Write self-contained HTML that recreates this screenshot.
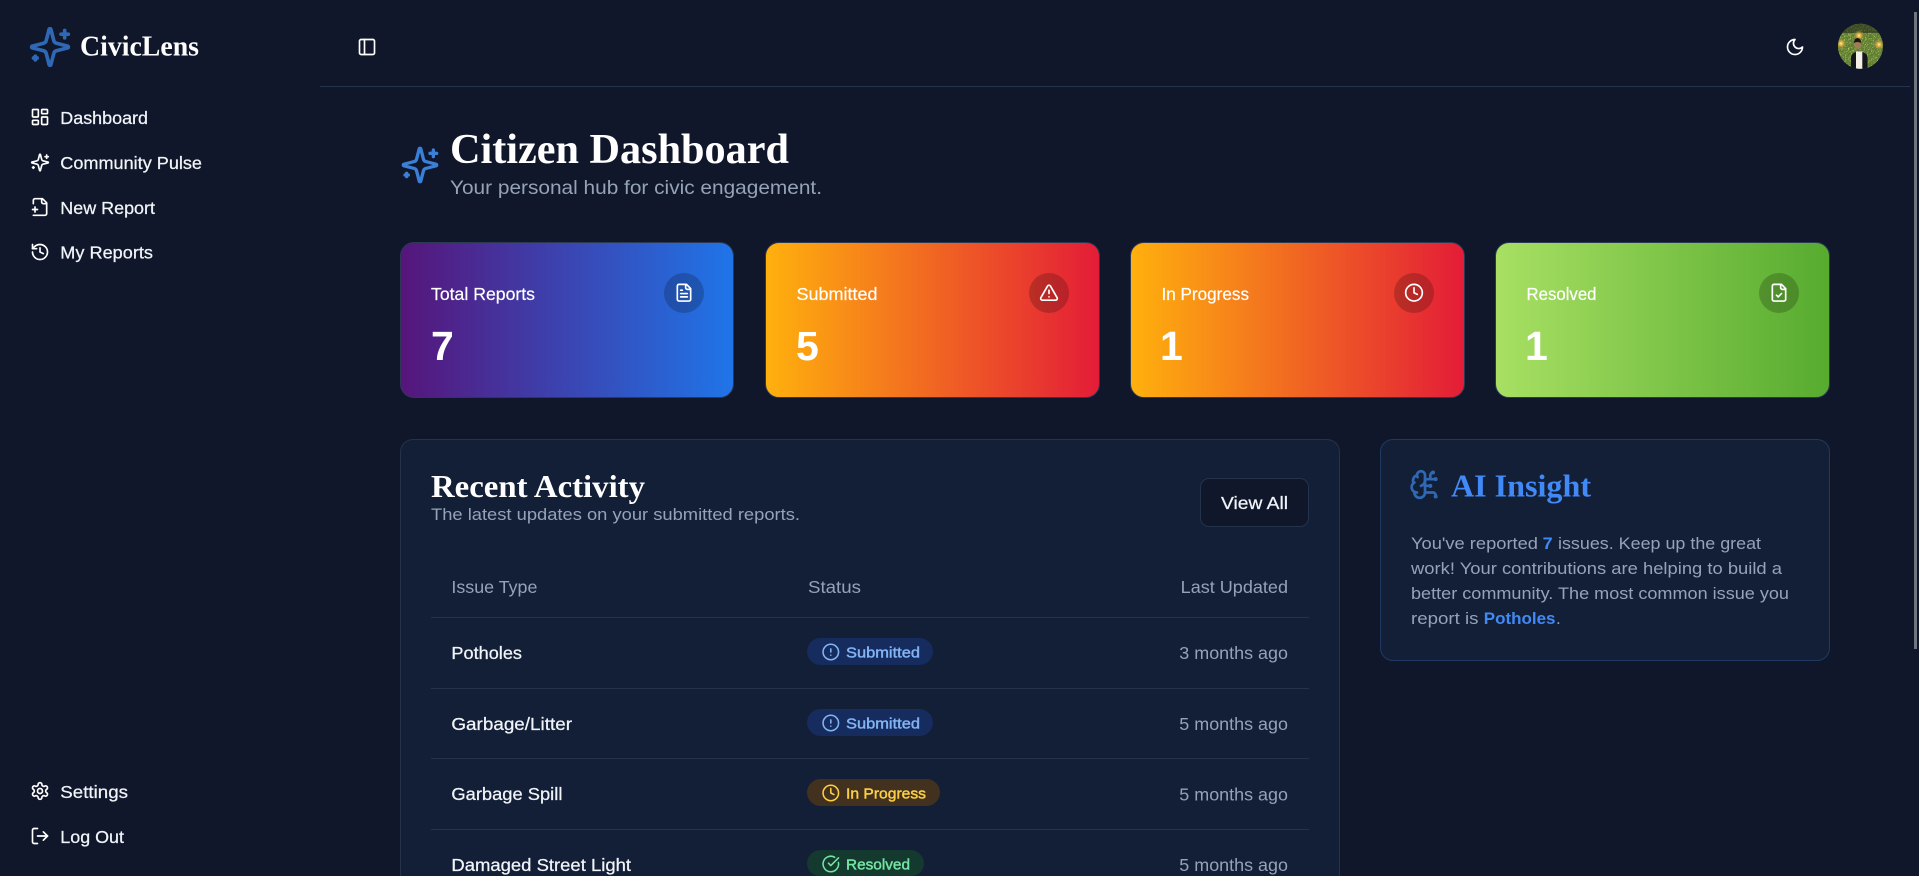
<!DOCTYPE html>
<html lang="en">
<head>
<meta charset="utf-8">
<title>CivicLens - Citizen Dashboard</title>
<style>
html,body{margin:0;padding:0;width:1919px;height:876px;overflow:hidden;background:#10172a}
#page{position:relative;width:1919px;height:876px;overflow:hidden;background:#10172a}
.box{position:absolute;box-sizing:border-box}
.stat{top:242.3px;width:334.4px;height:156px;border-radius:14px;border:1px solid #2b3953;background-origin:border-box}
.circle{position:absolute;top:272.7px;width:40px;height:40px;border-radius:50%;background:rgba(0,0,0,.2)}
.card{background:#131f36;border:1px solid #24324c;border-radius:13px}
.rule{position:absolute;height:1px;background:#24324c}
.pill{position:absolute;height:27px;border-radius:14px}
svg.top{position:absolute;left:0;top:0}
text{font-family:"Liberation Sans",sans-serif;font-size:17.6px;fill:#f1f5f9}
.m{stroke:#f1f5f9;stroke-width:.25px}
.mut{fill:#94a3b8}
.serif{font-family:"Liberation Serif",serif;font-weight:700;fill:#fff}
.wh{fill:#fff;stroke:#fff;stroke-width:.2px}
.num{font-weight:700;font-size:41px;fill:#fff}
.bdg{font-size:15px;stroke-width:.45px}
.p{font-size:17px;fill:#94a3b8}
.b{font-size:17px;font-weight:700;fill:#4189f6}
.i{fill:none;stroke:#fff;stroke-width:2;stroke-linecap:round;stroke-linejoin:round}
</style>
</head>
<body>
<div id="page">
<div class="box" style="left:320px;top:86px;width:1590px;height:1px;background:#24324c"></div>
<div class="box" style="left:1914px;top:12px;width:2.5px;height:637px;background:#71757d"></div>

<div class="box stat" style="left:400.1px;background-image:linear-gradient(90deg,#56157a,#1f75e9)"></div>
<div class="box stat" style="left:765.2px;background-image:linear-gradient(90deg,#ffb10d,#e31c37)"></div>
<div class="box stat" style="left:1130.3px;background-image:linear-gradient(90deg,#ffb10d,#e31c37)"></div>
<div class="box stat" style="left:1495.4px;background-image:linear-gradient(90deg,#a8e063,#56ab2f)"></div>
<div class="circle" style="left:664px"></div>
<div class="circle" style="left:1029px"></div>
<div class="circle" style="left:1394px"></div>
<div class="circle" style="left:1759px"></div>

<div class="box card" style="left:400px;top:439.3px;width:939.5px;height:436.7px;border-bottom:0;border-radius:13px 13px 0 0"></div>
<div class="box card" style="left:1380px;top:439.3px;width:449.5px;height:221.5px;border-color:#1e3a63"></div>
<div class="box" style="left:1200px;top:478px;width:109px;height:49px;background:#10172a;border:1px solid #24324c;border-radius:9px"></div>

<div class="rule" style="left:431px;top:617px;width:878px"></div>
<div class="rule" style="left:431px;top:688px;width:878px"></div>
<div class="rule" style="left:431px;top:758px;width:878px"></div>
<div class="rule" style="left:431px;top:829px;width:878px"></div>

<div class="pill" style="left:807px;top:638px;width:126px;background:#162c5e"></div>
<div class="pill" style="left:807px;top:709px;width:126px;background:#162c5e"></div>
<div class="pill" style="left:807px;top:779px;width:133px;background:#43311f"></div>
<div class="pill" style="left:807px;top:850px;width:117px;height:26px;border-radius:14px 14px 13px 13px;background:#14392f"></div>

<svg class="top" width="1919" height="876" viewBox="0 0 1919 876" xmlns="http://www.w3.org/2000/svg">
<defs>
<filter id="leaf" x="0" y="0" width="100%" height="100%"><feTurbulence type="fractalNoise" baseFrequency=".6" numOctaves="2" seed="4"/><feColorMatrix values="0 0 0 0 .1  0 0 0 0 .16  0 0 0 0 .04  2.4 0 0 0 -.9"/></filter>
<filter id="leaf2" x="0" y="0" width="100%" height="100%"><feTurbulence type="fractalNoise" baseFrequency=".7" numOctaves="2" seed="9"/><feColorMatrix values="0 0 0 0 .72  0 0 0 0 .8  0 0 0 0 .3  2.8 0 0 0 -1.3"/></filter>
<clipPath id="av"><circle cx="1860.5" cy="46.3" r="22.5"/></clipPath>
<radialGradient id="glow"><stop offset="0" stop-color="#fff0b0"/><stop offset=".4" stop-color="#e8b040" stop-opacity=".85"/><stop offset="1" stop-color="#a08a20" stop-opacity="0"/></radialGradient>
</defs>

<!-- logo -->
<svg x="28" y="25" width="44" height="44" viewBox="0 0 24 24" class="i" style="stroke:#2f68b5"><path d="M9.937 15.5A2 2 0 0 0 8.5 14.063l-6.135-1.582a.5.5 0 0 1 0-.962L8.5 9.936A2 2 0 0 0 9.937 8.5l1.582-6.135a.5.5 0 0 1 .963 0L14.063 8.5A2 2 0 0 0 15.5 9.937l6.135 1.581a.5.5 0 0 1 0 .964L15.5 14.063a2 2 0 0 0-1.437 1.437l-1.582 6.135a.5.5 0 0 1-.963 0z"/><path d="M20 3v4M22 5h-4M4 17v2M5 18H3"/></svg>
<text class="serif" x="80" y="55.5" style="font-size:29px" textLength="119" lengthAdjust="spacingAndGlyphs">CivicLens</text>

<!-- nav icons -->
<svg x="30" y="107" width="20" height="20" viewBox="0 0 24 24" class="i"><rect width="7" height="9" x="3" y="3" rx="1"/><rect width="7" height="5" x="14" y="3" rx="1"/><rect width="7" height="9" x="14" y="12" rx="1"/><rect width="7" height="5" x="3" y="16" rx="1"/></svg>
<svg x="30" y="152.5" width="20" height="20" viewBox="0 0 24 24" class="i"><path d="M9.937 15.5A2 2 0 0 0 8.5 14.063l-6.135-1.582a.5.5 0 0 1 0-.962L8.5 9.936A2 2 0 0 0 9.937 8.5l1.582-6.135a.5.5 0 0 1 .963 0L14.063 8.5A2 2 0 0 0 15.5 9.937l6.135 1.581a.5.5 0 0 1 0 .964L15.5 14.063a2 2 0 0 0-1.437 1.437l-1.582 6.135a.5.5 0 0 1-.963 0z"/><path d="M20 3v4M22 5h-4M4 17v2M5 18H3"/></svg>
<svg x="30" y="197" width="20" height="20" viewBox="0 0 24 24" class="i"><path d="M4 22h14a2 2 0 0 0 2-2V7l-5-5H6a2 2 0 0 0-2 2v4"/><path d="M14 2v4a2 2 0 0 0 2 2h4"/><path d="M3 15h6"/><path d="M6 12v6"/></svg>
<svg x="30" y="242" width="20" height="20" viewBox="0 0 24 24" class="i"><path d="M3 12a9 9 0 1 0 9-9 9.75 9.75 0 0 0-6.74 2.74L3 8"/><path d="M3 3v5h5"/><path d="M12 7v5l4 2"/></svg>
<svg x="30" y="781" width="20" height="20" viewBox="0 0 24 24" class="i"><path d="M12.22 2h-.44a2 2 0 0 0-2 2v.18a2 2 0 0 1-1 1.73l-.43.25a2 2 0 0 1-2 0l-.15-.08a2 2 0 0 0-2.73.73l-.22.38a2 2 0 0 0 .73 2.73l.15.1a2 2 0 0 1 1 1.72v.51a2 2 0 0 1-1 1.74l-.15.09a2 2 0 0 0-.73 2.73l.22.38a2 2 0 0 0 2.73.73l.15-.08a2 2 0 0 1 2 0l.43.25a2 2 0 0 1 1 1.73V20a2 2 0 0 0 2 2h.44a2 2 0 0 0 2-2v-.18a2 2 0 0 1 1-1.73l.43-.25a2 2 0 0 1 2 0l.15.08a2 2 0 0 0 2.73-.73l.22-.39a2 2 0 0 0-.73-2.73l-.15-.08a2 2 0 0 1-1-1.74v-.5a2 2 0 0 1 1-1.74l.15-.09a2 2 0 0 0 .73-2.73l-.22-.38a2 2 0 0 0-2.73-.73l-.15.08a2 2 0 0 1-2 0l-.43-.25a2 2 0 0 1-1-1.73V4a2 2 0 0 0-2-2z"/><circle cx="12" cy="12" r="3"/></svg>
<svg x="30" y="826" width="20" height="20" viewBox="0 0 24 24" class="i"><path d="M9 21H5a2 2 0 0 1-2-2V5a2 2 0 0 1 2-2h4"/><polyline points="16 17 21 12 16 7"/><line x1="21" x2="9" y1="12" y2="12"/></svg>

<!-- nav text -->
<text class="m" x="60.3" y="124" textLength="87.7" lengthAdjust="spacingAndGlyphs">Dashboard</text>
<text class="m" x="60.3" y="169" textLength="141.7" lengthAdjust="spacingAndGlyphs">Community Pulse</text>
<text class="m" x="60.3" y="214" textLength="94.7" lengthAdjust="spacingAndGlyphs">New Report</text>
<text class="m" x="60.3" y="258.5" textLength="92.7" lengthAdjust="spacingAndGlyphs">My Reports</text>
<text class="m" x="60.3" y="798" textLength="67.7" lengthAdjust="spacingAndGlyphs">Settings</text>
<text class="m" x="60.3" y="843" textLength="63.7" lengthAdjust="spacingAndGlyphs">Log Out</text>

<!-- header -->
<svg x="357" y="37" width="20" height="20" viewBox="0 0 24 24" class="i"><rect width="18" height="18" x="3" y="3" rx="2"/><path d="M9 3v18"/></svg>
<svg x="1785" y="37" width="20" height="20" viewBox="0 0 24 24" class="i"><path d="M12 3a6 6 0 0 0 9 9 9 9 0 1 1-9-9Z"/></svg>

<!-- avatar -->
<g clip-path="url(#av)">
<rect x="1838" y="23" width="46" height="47" fill="#5f8428"/>
<rect x="1838" y="23" width="46" height="47" filter="url(#leaf2)"/>
<rect x="1838" y="23" width="46" height="47" filter="url(#leaf)"/>
<rect x="1838" y="23" width="46" height="10" fill="#24281a" opacity=".6"/>
<circle cx="1859" cy="35.5" r="5.5" fill="url(#glow)"/>
<circle cx="1841" cy="43.5" r="5.5" fill="url(#glow)"/>
<circle cx="1879" cy="44.5" r="5.5" fill="url(#glow)"/>
<path d="M1851 70v-13q1-4 5-5h6q5 1 5.5 5v13z" fill="#15151c"/>
<rect x="1856" y="51.5" width="6.3" height="18" fill="#f3f0e8"/>
<ellipse cx="1857.5" cy="44.5" rx="3.4" ry="4.5" fill="#a07c55"/>
<path d="M1854 43q0-5 3.5-5t3.5 5q-3.5-2-7 0z" fill="#1c1612"/>
</g>

<!-- title -->
<svg x="400" y="145" width="40" height="40" viewBox="0 0 24 24" class="i" style="stroke:#3a7fd8"><path d="M9.937 15.5A2 2 0 0 0 8.5 14.063l-6.135-1.582a.5.5 0 0 1 0-.962L8.5 9.936A2 2 0 0 0 9.937 8.5l1.582-6.135a.5.5 0 0 1 .963 0L14.063 8.5A2 2 0 0 0 15.5 9.937l6.135 1.581a.5.5 0 0 1 0 .964L15.5 14.063a2 2 0 0 0-1.437 1.437l-1.582 6.135a.5.5 0 0 1-.963 0z"/><path d="M20 3v4M22 5h-4M4 17v2M5 18H3"/></svg>
<text class="serif" x="450" y="163" style="font-size:42px" textLength="339" lengthAdjust="spacingAndGlyphs">Citizen Dashboard</text>
<text class="mut" x="450" y="194" style="font-size:19.8px" textLength="372" lengthAdjust="spacingAndGlyphs">Your personal hub for civic engagement.</text>

<!-- stats -->
<text class="wh" x="431" y="300" textLength="104" lengthAdjust="spacingAndGlyphs">Total Reports</text>
<text class="wh" x="796.5" y="300" textLength="81" lengthAdjust="spacingAndGlyphs">Submitted</text>
<text class="wh" x="1161.5" y="300" textLength="87.5" lengthAdjust="spacingAndGlyphs">In Progress</text>
<text class="wh" x="1526.5" y="300" textLength="70" lengthAdjust="spacingAndGlyphs">Resolved</text>
<text class="num" x="431" y="360">7</text>
<text class="num" x="796" y="360">5</text>
<text class="num" x="1160" y="360">1</text>
<text class="num" x="1525" y="360">1</text>

<svg x="674" y="282.7" width="20" height="20" viewBox="0 0 24 24" class="i"><path d="M15 2H6a2 2 0 0 0-2 2v16a2 2 0 0 0 2 2h12a2 2 0 0 0 2-2V7Z"/><path d="M14 2v4a2 2 0 0 0 2 2h4"/><path d="M10 9H8"/><path d="M16 13H8"/><path d="M16 17H8"/></svg>
<svg x="1039" y="282.7" width="20" height="20" viewBox="0 0 24 24" class="i"><path d="m21.73 18-8-14a2 2 0 0 0-3.48 0l-8 14A2 2 0 0 0 4 21h16a2 2 0 0 0 1.73-3"/><path d="M12 9v4"/><path d="M12 17h.01"/></svg>
<svg x="1404" y="282.7" width="20" height="20" viewBox="0 0 24 24" class="i"><circle cx="12" cy="12" r="10"/><polyline points="12 6 12 12 16 14"/></svg>
<svg x="1769" y="282.7" width="20" height="20" viewBox="0 0 24 24" class="i"><path d="M15 2H6a2 2 0 0 0-2 2v16a2 2 0 0 0 2 2h12a2 2 0 0 0 2-2V7Z"/><path d="M14 2v4a2 2 0 0 0 2 2h4"/><path d="m9 15 2 2 4-4"/></svg>

<!-- recent activity -->
<text class="serif" x="431" y="497" style="font-size:32px" textLength="214" lengthAdjust="spacingAndGlyphs">Recent Activity</text>
<text class="mut" x="431" y="520" style="font-size:17px" textLength="369" lengthAdjust="spacingAndGlyphs">The latest updates on your submitted reports.</text>
<text class="m" x="1221" y="509" textLength="67" lengthAdjust="spacingAndGlyphs">View All</text>

<text class="mut" x="451.4" y="593" textLength="86" lengthAdjust="spacingAndGlyphs">Issue Type</text>
<text class="mut" x="808" y="593" textLength="53" lengthAdjust="spacingAndGlyphs">Status</text>
<text class="mut" x="1180.7" y="593" textLength="107.3" lengthAdjust="spacingAndGlyphs">Last Updated</text>

<text class="m" x="451.4" y="659" textLength="70.6" lengthAdjust="spacingAndGlyphs">Potholes</text>
<text class="m" x="451.4" y="730" textLength="120.6" lengthAdjust="spacingAndGlyphs">Garbage/Litter</text>
<text class="m" x="451.4" y="800" textLength="111" lengthAdjust="spacingAndGlyphs">Garbage Spill</text>
<text class="m" x="451.4" y="871" textLength="179.6" lengthAdjust="spacingAndGlyphs">Damaged Street Light</text>

<text class="mut" x="1179.3" y="659" textLength="108.7" lengthAdjust="spacingAndGlyphs">3 months ago</text>
<text class="mut" x="1179.3" y="730" textLength="108.7" lengthAdjust="spacingAndGlyphs">5 months ago</text>
<text class="mut" x="1179.3" y="800.5" textLength="108.7" lengthAdjust="spacingAndGlyphs">5 months ago</text>
<text class="mut" x="1179.3" y="871" textLength="108.7" lengthAdjust="spacingAndGlyphs">5 months ago</text>

<!-- badges -->
<svg x="821.5" y="642.7" width="18.6" height="18.6" viewBox="0 0 24 24" class="i" style="stroke:#82b4f5"><circle cx="12" cy="12" r="10"/><line x1="12" x2="12" y1="8" y2="12"/><line x1="12" x2="12.01" y1="16" y2="16"/></svg>
<svg x="821.5" y="713.7" width="18.6" height="18.6" viewBox="0 0 24 24" class="i" style="stroke:#82b4f5"><circle cx="12" cy="12" r="10"/><line x1="12" x2="12" y1="8" y2="12"/><line x1="12" x2="12.01" y1="16" y2="16"/></svg>
<svg x="821.5" y="783.7" width="18.6" height="18.6" viewBox="0 0 24 24" class="i" style="stroke:#fbd045"><circle cx="12" cy="12" r="10"/><polyline points="12 6 12 12 16 14"/></svg>
<svg x="821.5" y="854.7" width="18.6" height="18.6" viewBox="0 0 24 24" class="i" style="stroke:#74e4a2"><path d="M21.801 10A10 10 0 1 1 17 3.335"/><path d="m9 11 3 3L22 4"/></svg>
<text class="bdg" x="846" y="657.5" style="fill:#82b4f5;stroke:#82b4f5" textLength="74" lengthAdjust="spacingAndGlyphs">Submitted</text>
<text class="bdg" x="846" y="728.5" style="fill:#82b4f5;stroke:#82b4f5" textLength="74" lengthAdjust="spacingAndGlyphs">Submitted</text>
<text class="bdg" x="846" y="798.5" style="fill:#fbd045;stroke:#fbd045" textLength="80" lengthAdjust="spacingAndGlyphs">In Progress</text>
<text class="bdg" x="846" y="869.5" style="fill:#74e4a2;stroke:#74e4a2" textLength="64" lengthAdjust="spacingAndGlyphs">Resolved</text>

<!-- AI insight -->
<svg x="1409" y="468.5" width="32" height="32" viewBox="0 0 24 24" class="i" style="stroke:#2f68b5"><path d="M12 5a3 3 0 1 0-5.997.125 4 4 0 0 0-2.526 5.77 4 4 0 0 0 .556 6.588A4 4 0 1 0 12 18Z"/><path d="M9 13a4.5 4.5 0 0 0 3-4"/><path d="M6.003 5.125A3 3 0 0 0 6.401 6.5"/><path d="M3.477 10.896a4 4 0 0 1 .585-.396"/><path d="M6 18a4 4 0 0 1-1.967-.516"/><path d="M12 13h4"/><path d="M12 18h6a2 2 0 0 1 2 2v1"/><path d="M12 8h8"/><path d="M16 8V5a2 2 0 0 1 2-2"/><circle cx="16" cy="13" r=".5"/><circle cx="18" cy="3" r=".5"/><circle cx="20" cy="21" r=".5"/><circle cx="20" cy="8" r=".5"/></svg>
<text class="serif" x="1451" y="496.5" style="font-size:32px;fill:#4189f6" textLength="140" lengthAdjust="spacingAndGlyphs">AI Insight</text>

<text class="p" x="1411" y="549" textLength="127" lengthAdjust="spacingAndGlyphs">You've reported</text>
<text class="b" x="1542.6" y="549" textLength="10" lengthAdjust="spacingAndGlyphs">7</text>
<text class="p" x="1558" y="549" textLength="203" lengthAdjust="spacingAndGlyphs">issues. Keep up the great</text>
<text class="p" x="1411" y="574" textLength="371" lengthAdjust="spacingAndGlyphs">work! Your contributions are helping to build a</text>
<text class="p" x="1411" y="599" textLength="378" lengthAdjust="spacingAndGlyphs">better community. The most common issue you</text>
<text class="p" x="1411" y="624" textLength="67.5" lengthAdjust="spacingAndGlyphs">report is</text>
<text class="b" x="1483.8" y="624" textLength="71.7" lengthAdjust="spacingAndGlyphs">Potholes</text>
<text class="p" x="1556" y="624">.</text>
</svg>
</div>
</body>
</html>
